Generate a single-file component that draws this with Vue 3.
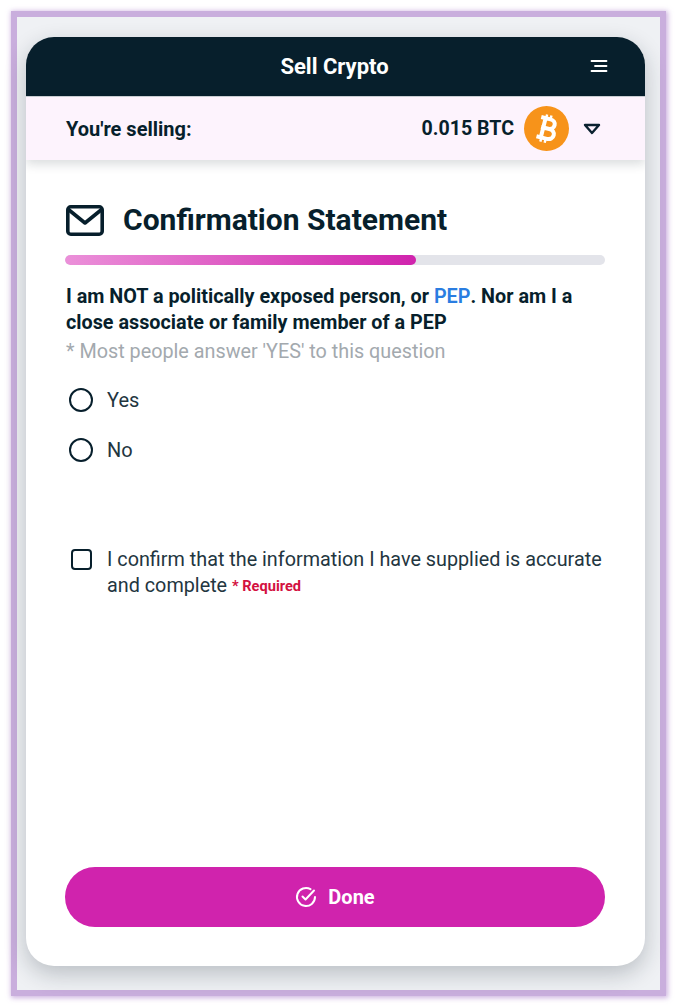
<template>
  <div class="page">
    <div class="frame">
      <div class="card">
        <header class="top">
          <span class="top-title">Sell Crypto</span>
          <svg class="burger" width="18" height="14" viewBox="0 0 18 14" fill="none" stroke="#fff" stroke-width="1.8" stroke-linecap="round">
            <path d="M1.500 2h15M5 7h11.500M1.500 12h15" />
          </svg>
        </header>

        <div class="selling">
          <span class="selling-label">You're selling:</span>
          <div class="selling-right">
            <span class="amount">0.015 BTC</span>
            <svg class="coin" width="45" height="45" viewBox="0 0 45 45">
              <circle cx="22.5" cy="22.5" r="22.5" fill="#f7931a" />
              <g transform="rotate(14 22.5 22.5) translate(22.5 22.5) scale(1.12) translate(-23.5 -22.3)">
                <path fill="none" stroke="#fff" stroke-width="3.6" d="M16.500 13.500h8.500c3 0 4.800 1.700 4.800 4.200s-1.800 4.400-4.800 4.400h-6M18.500 22.100h7.500c3.200 0 5.200 1.800 5.200 4.500s-2 4.600-5.200 4.600h-9.500M20.500 13.500v17.700" />
                <path fill="none" stroke="#fff" stroke-width="2.200" d="M21 10v4M25 10v4M21 31v4M25 31v4" />
              </g>
            </svg>
            <svg class="caret" width="18" height="12" viewBox="0 0 18 12">
              <path d="M2 2h14l-7 8z" fill="none" stroke="#0b2230" stroke-width="2.400" stroke-linejoin="round" />
            </svg>
          </div>
        </div>

        <main class="body">
          <div class="heading">
            <svg width="38" height="31" viewBox="0 0 38 31" fill="none" stroke="#071f2c" stroke-width="3.600" stroke-linejoin="round" stroke-linecap="round">
              <rect x="1.800" y="1.800" width="34.400" height="27.400" rx="3" />
              <path d="M3 5l16 13L35 5" />
            </svg>
            <h1>Confirmation Statement</h1>
          </div>

          <div class="progress">
            <div class="progress-fill" :style="{ width: progress + '%' }"></div>
          </div>

          <p class="question">I am NOT a politically exposed person, or <span class="pep">PEP</span>. Nor am I a close associate or family member of a PEP</p>
          <p class="hint">* Most people answer 'YES' to this question</p>

          <div class="options">
            <label v-for="opt in options" :key="opt" class="option">
              <span class="radio"></span>
              <span>{{ opt }}</span>
            </label>
          </div>

          <div class="confirm">
            <span class="checkbox"></span>
            <p>I confirm that the information I have supplied is accurate and complete <span class="required">* Required</span></p>
          </div>

          <button class="done">
            <svg width="22" height="22" viewBox="0 0 22 22" fill="none" stroke="#fff" stroke-width="2" stroke-linecap="round" stroke-linejoin="round">
              <path d="M20 11a9 9 0 1 1-4.500-7.800" />
              <path d="M7.500 10.500l3 3L19 4.500" />
            </svg>
            <span>Done</span>
          </button>
        </main>
      </div>
    </div>
  </div>
</template>

<script setup>
const progress = 65
const options = ['Yes', 'No']
</script>

<style>
html, body {
  margin: 0;
  background: #fff;
}
</style>

<style scoped>
.page {
  width: 677px;
  height: 1007px;
  padding: 11px;
  box-sizing: border-box;
  font-family: Roboto, "Liberation Sans", sans-serif;
  color: #071f2c;
}

.frame {
  width: 655px;
  height: 985px;
  box-sizing: border-box;
  border: 6px solid #c9aedd;
  padding: 20px 15px 24px 9px;
  background: #eff1f4;
  box-shadow: 1px 1px 5px 1px rgba(190, 155, 215, 0.75);
}

.card {
  height: 929px;
  display: flex;
  flex-direction: column;
  background: #fff;
  border-radius: 28px;
  box-shadow: 0 8px 22px rgba(20, 35, 45, 0.24);
  overflow: hidden;
}

.top {
  height: 59px;
  flex: none;
  display: flex;
  align-items: center;
  justify-content: center;
  position: relative;
  background: #071f2c;
  border-bottom: 1px solid #cfd3d8;
}

.top-title {
  color: #fff;
  font-size: 22px;
  font-weight: 700;
  margin-left: -2px;
}

.burger {
  position: absolute;
  right: 37px;
  top: 22px;
}

.selling {
  height: 63px;
  flex: none;
  display: flex;
  align-items: center;
  justify-content: space-between;
  padding: 0 44px 0 40px;
  background: #fdf3fd;
  box-shadow: 0 4px 10px rgba(20, 35, 45, 0.16);
  position: relative;
}

.selling-label {
  font-size: 20px;
  font-weight: 700;
}

.amount {
  font-size: 19.6px;
  font-weight: 700;
}

.selling-right {
  display: flex;
  align-items: center;
}

.coin {
  margin-left: 10px;
}

.caret {
  margin-left: 14px;
}

.body {
  flex: 1;
  display: flex;
  flex-direction: column;
  padding: 43px 40px 39px 39px;
}

.heading {
  display: flex;
  align-items: center;
  gap: 19px;
  padding-left: 1px;
}

.heading h1 {
  margin: 0;
  font-size: 30px;
  font-weight: 700;
  line-height: 34px;
}

.progress {
  height: 10px;
  margin-top: 18px;
  border-radius: 5px;
  background: #e3e4ea;
  overflow: hidden;
}

.progress-fill {
  height: 100%;
  border-radius: 5px;
  background: linear-gradient(90deg, #eb90d9, #d023ad);
}

.question {
  margin: 19px 0 0;
  padding-left: 1px;
  font-size: 19.8px;
  font-weight: 700;
  line-height: 26px;
}

.pep {
  color: #2a7de1;
  font-weight: 600;
}

.hint {
  margin: 3px 0 0;
  padding-left: 1px;
  font-size: 19.8px;
  line-height: 26px;
  color: #a3a9ae;
}

.options {
  margin-top: 22px;
  display: flex;
  flex-direction: column;
  gap: 24px;
}

.option {
  display: flex;
  align-items: center;
  gap: 14px;
  height: 26px;
  padding-left: 4px;
  font-size: 20px;
  color: #23363f;
}

.radio {
  width: 20px;
  height: 20px;
  border: 2.500px solid #071f2c;
  border-radius: 50%;
}

.confirm {
  display: flex;
  align-items: flex-start;
  gap: 15px;
  margin-top: 84px;
  padding-left: 6px;
}

.checkbox {
  flex: none;
  width: 17px;
  height: 17px;
  margin-top: 2px;
  border: 2.500px solid #071f2c;
  border-radius: 4px;
}

.confirm p {
  margin: 0;
  font-size: 19.8px;
  line-height: 26px;
  color: #23363f;
}

.required {
  font-size: 14.6px;
  font-weight: 700;
  color: #d3113f;
  vertical-align: 1px;
}

.done {
  margin-top: auto;
  height: 60px;
  border: 0;
  border-radius: 30px;
  background: #d023ad;
  color: #fff;
  display: flex;
  align-items: center;
  justify-content: center;
  gap: 11px;
  font-family: inherit;
  font-size: 20px;
  font-weight: 700;
}
</style>
